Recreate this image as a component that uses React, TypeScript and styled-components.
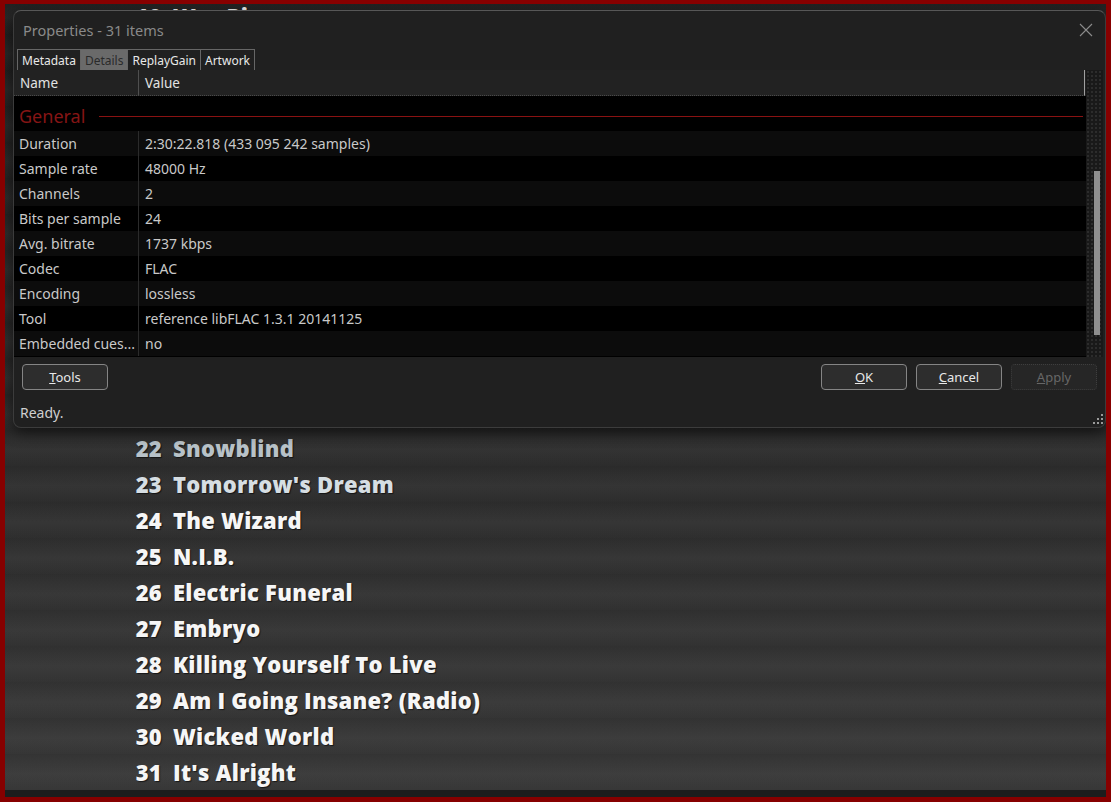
import React, { ReactElement } from 'react';
import styled, { createGlobalStyle } from 'styled-components';

const GlobalStyle = createGlobalStyle`
  html, body {
    margin: 0;
    padding: 0;
    background: #8b0000;
  }
  body {
    font-family: 'Segoe UI', 'Noto Sans', 'Open Sans', sans-serif;
    overflow: hidden;
  }
`;

const Frame = styled.div`
  position: relative;
  display: flex;
  flex-direction: column;
  box-sizing: border-box;
  width: 1111px;
  height: 802px;
  border: 5px solid #870000;
  border-top-width: 4px;
  background: #262626;
  overflow: hidden;
`;

const Playlist = styled.div`
  flex: 1;
  display: flex;
  flex-direction: column;
  overflow: hidden;
  background: linear-gradient(to bottom, #222 0%, #2c2c2c 55%, #383838 100%);
`;

const TrackList = styled.div`
  display: flex;
  flex-direction: column;
  margin-top: -6px;
`;

const TrackRow = styled.div`
  display: flex;
  align-items: center;
  gap: 11px;
  height: 36px;
  flex-shrink: 0;
  padding-left: 115px;
  background: linear-gradient(to bottom, rgba(0, 0, 0, 0.06), rgba(255, 255, 255, 0.03) 55%, rgba(0, 0, 0, 0.02));
`;

const TrackNo = styled.span<{ $tint: string }>`
  width: 42px;
  text-align: right;
  font-family: 'Open Sans', 'Noto Sans', sans-serif;
  font-weight: 800;
  font-size: 22px;
  letter-spacing: 0.25px;
  color: ${(p) => p.$tint};
  text-shadow: 1px 1px 1px rgba(0, 0, 0, 0.6);
`;

const TrackTitle = styled(TrackNo)`
  width: auto;
  text-align: left;
`;

const BottomBar = styled.div`
  height: 7px;
  flex-shrink: 0;
  background: #1d1d1d;
`;

/* dialog */

const Dialog = styled.div`
  position: absolute;
  left: 8px;
  top: 6px;
  width: 1093px;
  height: 418px;
  box-sizing: border-box;
  display: flex;
  flex-direction: column;
  background: #202020;
  border: 1px solid #3c3c3c;
  border-top-color: #575757;
  border-radius: 8px;
  box-shadow: 0 4px 14px rgba(0, 0, 0, 0.6);
`;

const TitleBar = styled.div`
  display: flex;
  align-items: center;
  justify-content: space-between;
  box-sizing: border-box;
  height: 36px;
  padding: 1px 12px 0 9px;
`;

const Caption = styled.span`
  font-size: 14.5px;
  color: #8a8a8a;
`;

const CloseButton = styled.button`
  display: flex;
  padding: 0;
  border: 0;
  background: transparent;
`;

const TabStrip = styled.div`
  display: flex;
  margin-top: 2px;
  padding-left: 3px;
  height: 21px;
`;

const Tab = styled.div<{ $active?: boolean }>`
  display: flex;
  align-items: center;
  box-sizing: border-box;
  padding: 0 4px;
  height: 21px;
  font-size: 12px;
  color: ${(p) => (p.$active ? '#2a2a2a' : '#e8e8e8')};
  background: ${(p) => (p.$active ? '#6a6a6a' : 'transparent')};
  border: 1px solid #666;
  border-bottom: 0;
  & + & {
    border-left: 0;
  }
`;

const ListView = styled.div`
  display: flex;
  height: 287px;
  margin-right: 2px;
`;

const ListMain = styled.div`
  flex: 1;
  display: flex;
  flex-direction: column;
`;

const Header = styled.div`
  display: flex;
  height: 26px;
  box-sizing: border-box;
  background: #222;
  border-bottom: 1px dotted #4a4a4a;
  border-right: 1px solid #a0a0a0;
  margin-right: 1px;
`;

const HeaderCell = styled.div<{ $width?: number }>`
  display: flex;
  align-items: center;
  ${(p) => (p.$width ? `width: ${p.$width}px;` : 'flex: 1;')}
  box-sizing: border-box;
  padding-left: 6px;
  font-size: 13.5px;
  color: #e2e2e2;
  ${(p) => p.$width && 'border-right: 1px solid #4f4f4f;'}
`;

const Body = styled.div`
  flex: 1;
  display: flex;
  flex-direction: column;
  background: #000;
  padding-top: 10px;
`;

const GroupRow = styled.div`
  display: flex;
  align-items: center;
  height: 25px;
  padding: 0 3px 5px 5px;
  box-sizing: border-box;
`;

const GroupLabel = styled.span`
  font-size: 18px;
  color: #851515;
`;

const GroupLine = styled.div`
  flex: 1;
  height: 1px;
  margin-left: 14px;
  background: #8a1212;
`;

const Row = styled.div<{ $odd: boolean }>`
  display: flex;
  height: 25px;
  background: ${(p) => (p.$odd ? '#0c0c0c' : '#000')};
`;

const Cell = styled.div<{ $width?: number }>`
  display: flex;
  align-items: center;
  box-sizing: border-box;
  ${(p) => (p.$width ? `width: ${p.$width}px;` : 'flex: 1;')}
  padding-left: ${(p) => (p.$width ? 5 : 6)}px;
  font-size: 14px;
  color: #c9c9c9;
  white-space: nowrap;
  overflow: hidden;
  ${(p) => p.$width && 'border-right: 1px solid #2b2b2b;'}
`;

const Scrollbar = styled.div`
  width: 17px;
  box-sizing: border-box;
  padding: 101px 0 0 8px;
  background-color: #191919;
  background-image: radial-gradient(circle, #2c2c2c 0.8px, transparent 1px);
  background-size: 4px 4px;
`;

const Thumb = styled.div`
  width: 6px;
  height: 164px;
  background: #8e8e8e;
`;

const ButtonRow = styled.div`
  display: flex;
  gap: 9px;
  margin-top: 7px;
  padding: 0 8px;
`;

const Button = styled.button<{ $disabled?: boolean }>`
  width: 86px;
  height: 26px;
  box-sizing: border-box;
  padding: 0;
  font-family: inherit;
  font-size: 13px;
  color: ${(p) => (p.$disabled ? '#676767' : '#e8e8e8')};
  background: ${(p) => (p.$disabled ? '#262626' : '#2d2d2d')};
  border: 1px ${(p) => (p.$disabled ? 'dotted #3e3e3e' : 'solid #858585')};
  border-radius: 4px;
`;

const Spacer = styled.div`
  flex: 1;
`;

const StatusBar = styled.div`
  display: flex;
  align-items: center;
  flex: 1;
  padding: 8px 0 0 6px;
  font-size: 14px;
  color: #cfcfcf;
`;

const Grip = styled.svg`
  position: absolute;
  right: 2px;
  bottom: 3px;
`;

// rows 11-21 sit behind the dialog; only their stripes matter
const tracks: [number, string][] = [
  [10, 'War Pigs'],
  ...Array.from({ length: 11 }, (_, i): [number, string] => [11 + i, '']),
  [22, 'Snowblind'],
  [23, "Tomorrow's Dream"],
  [24, 'The Wizard'],
  [25, 'N.I.B.'],
  [26, 'Electric Funeral'],
  [27, 'Embryo'],
  [28, 'Killing Yourself To Live'],
  [29, 'Am I Going Insane? (Radio)'],
  [30, 'Wicked World'],
  [31, "It's Alright"],
];

const tintFor = (n: number): string => {
  if (n === 22) return '#b8c2c8';
  if (n === 23) return '#d6dee3';
  return '#f6f6f6';
};

const details: [string, string][] = [
  ['Duration', '2:30:22.818 (433 095 242 samples)'],
  ['Sample rate', '48000 Hz'],
  ['Channels', '2'],
  ['Bits per sample', '24'],
  ['Avg. bitrate', '1737 kbps'],
  ['Codec', 'FLAC'],
  ['Encoding', 'lossless'],
  ['Tool', 'reference libFLAC 1.3.1 20141125'],
  ['Embedded cues...', 'no'],
];

const App = (): ReactElement => (
  <>
    <GlobalStyle />
    <Frame>
      <Playlist>
        <TrackList>
          {tracks.map(([n, title]) => (
            <TrackRow key={n}>
              {title && (
                <>
                  <TrackNo $tint={tintFor(n)}>{n}</TrackNo>
                  <TrackTitle $tint={tintFor(n)}>{title}</TrackTitle>
                </>
              )}
            </TrackRow>
          ))}
        </TrackList>
      </Playlist>
      <BottomBar />

      <Dialog>
        <TitleBar>
          <Caption>Properties - 31 items</Caption>
          <CloseButton>
            <svg width="14" height="14" viewBox="0 0 14 14">
              <path d="M1 1 L13 13 M13 1 L1 13" stroke="#8c8c8c" strokeWidth="1.1" />
            </svg>
          </CloseButton>
        </TitleBar>
        <TabStrip>
          <Tab>Metadata</Tab>
          <Tab $active>Details</Tab>
          <Tab>ReplayGain</Tab>
          <Tab>Artwork</Tab>
        </TabStrip>
        <ListView>
          <ListMain>
            <Header>
              <HeaderCell $width={125}>Name</HeaderCell>
              <HeaderCell>Value</HeaderCell>
            </Header>
            <Body>
              <GroupRow>
                <GroupLabel>General</GroupLabel>
                <GroupLine />
              </GroupRow>
              {details.map(([name, value], i) => (
                <Row key={name} $odd={i % 2 === 0}>
                  <Cell $width={125}>{name}</Cell>
                  <Cell>{value}</Cell>
                </Row>
              ))}
            </Body>
          </ListMain>
          <Scrollbar>
            <Thumb />
          </Scrollbar>
        </ListView>
        <ButtonRow>
          <Button><u>T</u>ools</Button>
          <Spacer />
          <Button><u>O</u>K</Button>
          <Button><u>C</u>ancel</Button>
          <Button $disabled><u>A</u>pply</Button>
        </ButtonRow>
        <StatusBar>Ready.</StatusBar>
        <Grip width="10" height="10" viewBox="0 0 10 10">
          {[[8, 0], [8, 4], [4, 4], [8, 8], [4, 8], [0, 8]].map(([x, y]) => (
            <rect key={`${x}-${y}`} x={x} y={y} width="2" height="2" fill="#9a9a9a" />
          ))}
        </Grip>
      </Dialog>
    </Frame>
  </>
);

export default App;
